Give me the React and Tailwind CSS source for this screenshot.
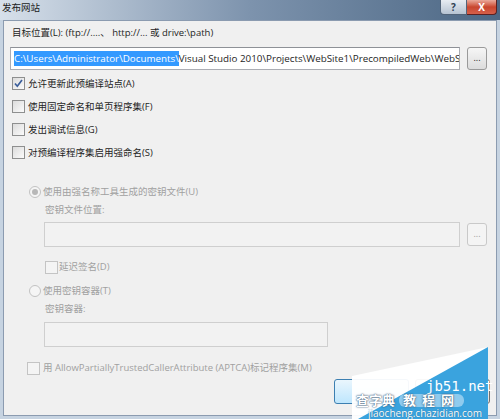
import React from "react";

const FONT = { fontFamily: '"Open Sans", "Noto Sans CJK SC", sans-serif' };

function Check({ checked, disabled }) {
  return (
    <span
      className={`relative inline-flex w-[13px] h-[13px] shrink-0 border ${
        disabled ? "border-[#c4c4c4] bg-[#f4f4f4]" : "border-[#8e8f8f] bg-gradient-to-br from-[#dcdcdc] to-[#fbfbfb]"
      }`}
    >
      {checked && (
        <svg viewBox="0 0 11 11" className="absolute inset-0 w-[11px] h-[11px]">
          <path d="M2 5.5 L4.3 8.2 L9 2" fill="none" stroke="#3a5d9a" strokeWidth="1.7" />
        </svg>
      )}
    </span>
  );
}

function Radio({ selected }) {
  return (
    <span className="relative inline-flex w-[12px] h-[12px] shrink-0 rounded-full border border-[#c2c2c2] bg-[#f5f5f5] items-center justify-center">
      {selected && <span className="w-[6px] h-[6px] rounded-full bg-[#b8b8b8]" />}
    </span>
  );
}

function DotsBtn({ disabled }) {
  return (
    <div
      className={`w-[20px] h-[23px] rounded-[3px] border flex items-center justify-center text-[9px] leading-none ${
        disabled
          ? "border-[#c9c9c9] bg-[#f4f4f4] text-[#a0a0a0]"
          : "border-[#9a9a9a] bg-gradient-to-b from-[#f6f6f6] to-[#dcdcdc] text-[#222]"
      }`}
    >
      <span className="-mt-[2px]">...</span>
    </div>
  );
}

export default function App() {
  return (
    <div
      className="w-[500px] h-[419px] overflow-hidden relative bg-[#c6d3e1] text-[9.5px] leading-none"
      style={FONT}
    >
      {/* Title bar */}
      <div className="h-[20px] flex items-start bg-gradient-to-r from-[#d7e0ea] via-[#7d93ad] to-[#4c6784] relative">
        <div className="pl-[2px] pt-[3px] text-[9.5px] text-[#1b1b1b]">发布网站</div>
        <div className="ml-auto flex mr-[3px]">
          <div className="w-[27px] h-[15px] rounded-bl-[4px] border border-[#52647a] border-t-0 bg-gradient-to-b from-[#e7ecf2] to-[#b6c3d2] flex items-center justify-center text-[10px] font-bold text-[#2d3d52]">
            ?
          </div>
          <div className="w-[30px] h-[15px] rounded-br-[4px] border border-[#5c2020] border-t-0 border-l-0 bg-gradient-to-b from-[#e9a99b] via-[#c8452e] to-[#d5604a] flex items-center justify-center text-[10px] font-bold text-white">
            X
          </div>
        </div>
      </div>

      {/* Client area */}
      <div className="absolute left-[3px] right-[3px] top-[20px] bottom-[3px] border border-[#8b9bb0] bg-[#f0f0f0] flex flex-col">
        <div className="pl-[8px] mt-[4px] h-[16px] flex items-center text-[#1e1e1e]">
          目标位置(L): (ftp://....、 http://... 或 drive:\path)
        </div>

        <div className="flex items-center mt-[6px] pl-[6px] gap-[7px]">
          <div className="w-[450px] h-[23px] border border-[#abadb3] border-t-[#8e9197] bg-white flex items-center pl-[3px] overflow-hidden whitespace-nowrap text-[9.8px]">
            <span className="bg-[#3399ff] text-white h-[15px] flex items-center">
              C:\Users\Administrator\Documents\
            </span>
            <span className="text-[#1e1e1e]">
              Visual Studio 2010\Projects\WebSite1\PrecompiledWeb\WebS
            </span>
          </div>
          <DotsBtn />
        </div>

        <div className="mt-[2px] flex flex-col pl-[8px] text-[#1e1e1e]">
          {[
            ["允许更新此预编译站点(A)", true],
            ["使用固定命名和单页程序集(F)", false],
            ["发出调试信息(G)", false],
            ["对预编译程序集启用强命名(S)", false],
          ].map(([t, c]) => (
            <div key={t} className="h-[23px] flex items-center gap-[3px]">
              <Check checked={c} />
              <span>{t}</span>
            </div>
          ))}
        </div>

        <div className="flex flex-col text-[#a0a0a0]">
          <div className="mt-[18px] h-[20px] pl-[25px] flex items-center gap-[2px]">
            <Radio selected />
            <span>使用由强名称工具生成的密钥文件(U)</span>
          </div>
          <div className="h-[16px] pl-[41px] flex items-center">密钥文件位置:</div>
          <div className="mt-[4px] pl-[40px] flex items-center gap-[7px]">
            <div className="w-[416px] h-[25px] border border-[#cfcfcf] bg-[#f2f2f2]" />
            <DotsBtn disabled />
          </div>
          <div className="mt-[10px] h-[20px] pl-[41px] flex items-center gap-[1px]">
            <Check disabled />
            <span>延迟签名(D)</span>
          </div>
          <div className="mt-[4px] h-[20px] pl-[25px] flex items-center gap-[2px]">
            <Radio />
            <span>使用密钥容器(T)</span>
          </div>
          <div className="h-[16px] pl-[41px] flex items-center">密钥容器:</div>
          <div className="mt-[5px] pl-[40px]">
            <div className="w-[284px] h-[25px] border border-[#cfcfcf] bg-[#f2f2f2]" />
          </div>
          <div className="mt-[11px] h-[20px] pl-[23px] flex items-center gap-[3px]">
            <Check disabled />
            <span>用 AllowPartiallyTrustedCallerAttribute (APTCA)标记程序集(M)</span>
          </div>
        </div>

        <div className="mt-[1px] flex justify-end pr-[6px] gap-[6px]">
          <div className="w-[75px] h-[25px] rounded-[3px] border border-[#3c7fb1] bg-gradient-to-b from-[#eaf6fd] to-[#bee6fd]" />
          <div className="w-[75px] h-[25px] rounded-[3px] border border-[#707070] bg-gradient-to-b from-[#f2f2f2] to-[#dddddd]" />
        </div>
      </div>

      {/* Watermark overlay */}
      <div className="absolute left-[330px] top-[345px] w-[170px] h-[74px]">
        <svg width="170" height="74" className="absolute inset-0">
          <polygon points="22,31 158,2 158,74 22,74" fill="#ffffff" opacity="0.95" />
          <polygon points="28,74 158,2 158,74" fill="#3aa3de" />
        </svg>
        <div
          className="absolute left-[96px] top-[34px] text-[14px] text-white leading-none"
          style={{ fontFamily: '"DejaVu Sans Mono", monospace' }}
        >
          jb51.net
        </div>
        <div
          className="absolute left-[26px] top-[48px] h-[14px] text-[13px] text-white leading-none font-bold flex items-center gap-[4px]"
          style={{ textShadow: "0 0 2px #3b5a78, 0 0 1px #3b5a78" }}
        >
          <span>查字典</span>
          <span className="bg-[#8fcbee] rounded-[6px] px-[4px] tracking-[6px]">教程网</span>
        </div>
        <div
          className="absolute left-[38px] top-[63px] text-[10px] text-white leading-none"
          style={{ textShadow: "0 0 1px #1d5f88" }}
        >
          jiaocheng.chazidian.com
        </div>
      </div>
    </div>
  );
}
